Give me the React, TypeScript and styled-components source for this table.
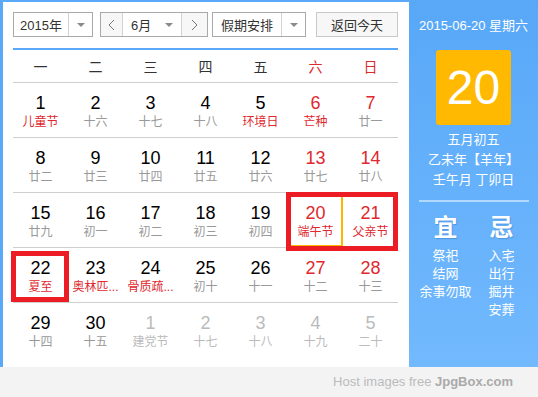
import styled, { createGlobalStyle } from "styled-components";

const GlobalStyle = createGlobalStyle`
  body {
    margin: 0;
    background: #f3f3f3;
    font-family: "Liberation Sans", "Noto Sans CJK SC", sans-serif;
  }
`;

type MarkKind = "left" | "right" | "single";

type Day = {
    num: number,
    lunar: string,
    weekend?: boolean,
    fest?: boolean,
    other?: boolean,
    today?: boolean,
    mark?: MarkKind
}

const weeks: Day[][] = [
    [
        { num: 1, lunar: "儿童节", fest: true },
        { num: 2, lunar: "十六" },
        { num: 3, lunar: "十七" },
        { num: 4, lunar: "十八" },
        { num: 5, lunar: "环境日", fest: true },
        { num: 6, lunar: "芒种", fest: true, weekend: true },
        { num: 7, lunar: "廿一", weekend: true },
    ],
    [
        { num: 8, lunar: "廿二" },
        { num: 9, lunar: "廿三" },
        { num: 10, lunar: "廿四" },
        { num: 11, lunar: "廿五" },
        { num: 12, lunar: "廿六" },
        { num: 13, lunar: "廿七", weekend: true },
        { num: 14, lunar: "廿八", weekend: true },
    ],
    [
        { num: 15, lunar: "廿九" },
        { num: 16, lunar: "初一" },
        { num: 17, lunar: "初二" },
        { num: 18, lunar: "初三" },
        { num: 19, lunar: "初四" },
        { num: 20, lunar: "端午节", fest: true, weekend: true, today: true, mark: "left" },
        { num: 21, lunar: "父亲节", fest: true, weekend: true, mark: "right" },
    ],
    [
        { num: 22, lunar: "夏至", fest: true, mark: "single" },
        { num: 23, lunar: "奥林匹...", fest: true },
        { num: 24, lunar: "骨质疏...", fest: true },
        { num: 25, lunar: "初十" },
        { num: 26, lunar: "十一" },
        { num: 27, lunar: "十二", weekend: true },
        { num: 28, lunar: "十三", weekend: true },
    ],
    [
        { num: 29, lunar: "十四" },
        { num: 30, lunar: "十五" },
        { num: 1, lunar: "建党节", other: true },
        { num: 2, lunar: "十七", other: true },
        { num: 3, lunar: "十八", other: true },
        { num: 4, lunar: "十九", other: true },
        { num: 5, lunar: "二十", other: true },
    ],
];

const weekdays = ["一", "二", "三", "四", "五", "六", "日"];

const Chevron = ({ dir }: { dir: "left" | "right" }) => (
    <svg width="7" height="12" viewBox="0 0 7 12">
        <polyline
            points={dir === "left" ? "6,1 1,6 6,11" : "1,1 6,6 1,11"}
            fill="none"
            stroke="#777"
            strokeWidth="1"
        />
    </svg>
);

const App = () => {
    return (
        <>
            <GlobalStyle />
            <Calendar>
                <Main>
                    <Toolbar>
                        <Select width={80}>
                            <SelectText>2015年</SelectText>
                            <ArrowPart><Caret /></ArrowPart>
                        </Select>
                        <Select width={108} gap={7}>
                            <NavButton side="left"><Chevron dir="left" /></NavButton>
                            <MonthPart>
                                <span>6月</span>
                                <Caret />
                            </MonthPart>
                            <NavButton side="right"><Chevron dir="right" /></NavButton>
                        </Select>
                        <Select width={94} gap={4}>
                            <SelectText>假期安排</SelectText>
                            <ArrowPart><Caret /></ArrowPart>
                        </Select>
                        <TodayButton>返回今天</TodayButton>
                    </Toolbar>

                    <WeekHeader>
                        {weekdays.map((w, i) => (
                            <Weekday key={w} weekend={i > 4}>{w}</Weekday>
                        ))}
                    </WeekHeader>

                    {weeks.map((week, wi) => (
                        <Week key={wi} last={wi === weeks.length - 1}>
                            {week.map((d, di) => (
                                <DayCell key={di} today={!!d.today}>
                                    <DayNum weekend={!!d.weekend} other={!!d.other}>{d.num}</DayNum>
                                    <Lunar fest={!!d.fest} other={!!d.other}>{d.lunar}</Lunar>
                                    {d.mark && <Mark kind={d.mark} />}
                                </DayCell>
                            ))}
                        </Week>
                    ))}
                </Main>

                <Side>
                    <DateLine>2015-06-20 星期六</DateLine>
                    <BigDay>20</BigDay>
                    <LunarInfo>
                        <div>五月初五</div>
                        <div>乙未年【羊年】</div>
                        <div>壬午月 丁卯日</div>
                    </LunarInfo>
                    <Divider />
                    <YiJi>
                        <YiJiCol>
                            <YiJiHead>宜</YiJiHead>
                            <YiJiItem>祭祀</YiJiItem>
                            <YiJiItem>结网</YiJiItem>
                            <YiJiItem>余事勿取</YiJiItem>
                        </YiJiCol>
                        <YiJiCol>
                            <YiJiHead>忌</YiJiHead>
                            <YiJiItem>入宅</YiJiItem>
                            <YiJiItem>出行</YiJiItem>
                            <YiJiItem>掘井</YiJiItem>
                            <YiJiItem>安葬</YiJiItem>
                        </YiJiCol>
                    </YiJi>
                </Side>
            </Calendar>
            <Footer>
                Host images free <b>JpgBox.com</b>
            </Footer>
        </>
    );
};

const Calendar = styled.div`
    display: flex;
    height: 367px;
    box-sizing: border-box;
    border-top: 2px solid #5aa9f8;
    border-left: 3px solid #5aa9f8;
`;

const Main = styled.div`
    width: 406px;
    box-sizing: border-box;
    background: #fff;
    padding: 10px 11px 0 10px;
`;

const Toolbar = styled.div`
    display: flex;
    height: 25px;
    margin-bottom: 11px;
`;

type SelectProps = { width: number, gap?: number };

const Select = styled.div<SelectProps>`
    display: flex;
    width: ${(p) => p.width}px;
    margin-left: ${(p) => p.gap || 0}px;
    box-sizing: border-box;
    border: 1px solid #a9a9a9;
    background: #fff;
    font-size: 13px;
    color: #333;
`;

const SelectText = styled.div`
    flex: 1;
    display: flex;
    align-items: center;
    justify-content: center;
`;

const ArrowPart = styled.div`
    width: 23px;
    border-left: 1px solid #d2d2d2;
    display: flex;
    align-items: center;
    justify-content: center;
`;

const Caret = styled.span`
    width: 0;
    height: 0;
    border-left: 4px solid transparent;
    border-right: 4px solid transparent;
    border-top: 4px solid #8a8a8a;
`;

const NavButton = styled.div<{ side: "left" | "right" }>`
    width: ${(p) => (p.side === "left" ? 21 : 25)}px;
    background: #f7f7f7;
    ${(p) => (p.side === "left" ? "border-right" : "border-left")}: 1px solid #d2d2d2;
    display: flex;
    align-items: center;
    justify-content: center;
`;

const MonthPart = styled.div`
    flex: 1;
    display: flex;
    align-items: center;
    justify-content: space-between;
    padding: 0 8px;
`;

const TodayButton = styled.div`
    width: 82px;
    margin-left: 10px;
    box-sizing: border-box;
    border: 1px solid #c8c8c8;
    background: #f7f7f7;
    font-size: 13px;
    color: #333;
    display: flex;
    align-items: center;
    justify-content: center;
`;

const WeekHeader = styled.div`
    display: grid;
    grid-template-columns: repeat(7, 55px);
    height: 35px;
    box-sizing: border-box;
    border-top: 2px solid #5aa9f8;
    border-bottom: 1px solid #cfcfcf;
`;

const Weekday = styled.div<{ weekend: boolean }>`
    display: flex;
    align-items: center;
    justify-content: center;
    font-size: 14px;
    color: ${(p) => (p.weekend ? "#e0282e" : "#333")};
`;

const Week = styled.div<{ last: boolean }>`
    display: grid;
    grid-template-columns: repeat(7, 55px);
    height: ${(p) => (p.last ? 54 : 55)}px;
    box-sizing: border-box;
    border-bottom: ${(p) => (p.last ? "none" : "1px solid #cfcfcf")};
`;

const DayCell = styled.div<{ today: boolean }>`
    position: relative;
    display: flex;
    flex-direction: column;
    align-items: center;
    box-sizing: border-box;
    padding-top: ${(p) => (p.today ? 8 : 10)}px;
    border: ${(p) => (p.today ? "2px solid #ffb400" : "none")};
`;

const DayNum = styled.div<{ weekend: boolean, other: boolean }>`
    font-size: 18px;
    line-height: 20px;
    color: ${(p) => (p.other ? "#bbb" : p.weekend ? "#e0282e" : "#000")};
`;

const Lunar = styled.div<{ fest: boolean, other: boolean }>`
    font-size: 12px;
    line-height: 18px;
    white-space: nowrap;
    color: ${(p) => (p.other ? "#bbb" : p.fest ? "#e0282e" : "#999")};
`;

// red highlight boxes drawn over the cells; "left" sits in the today cell,
// whose 2px border shifts its offsets
const markPos: Record<MarkKind, string> = {
    left: "top: -3px; bottom: -6px; left: -4px; right: -2px; border-right: none;",
    right: "top: -1px; bottom: -4px; left: 0; right: 0; border-left: none;",
    single: "top: 3px; bottom: 0; left: -2px; right: -1px;",
};

const Mark = styled.div<{ kind: MarkKind }>`
    position: absolute;
    border: 5px solid #ec1c24;
    ${(p) => markPos[p.kind]}
`;

const Side = styled.div`
    flex: 1;
    display: flex;
    flex-direction: column;
    align-items: center;
    padding-top: 14px;
    background: linear-gradient(#58a8f8, #72b9fe);
    color: #fff;
`;

const DateLine = styled.div`
    font-size: 13px;
    line-height: 20px;
`;

const BigDay = styled.div`
    width: 75px;
    height: 75px;
    margin-top: 14px;
    border-radius: 3px;
    background: #ffb900;
    font-size: 48px;
    line-height: 75px;
    text-align: center;
`;

const LunarInfo = styled.div`
    margin-top: 5px;
    font-size: 13px;
    line-height: 20px;
    text-align: center;
`;

const Divider = styled.div`
    width: 110px;
    height: 2px;
    margin-top: 10px;
    background: rgba(255, 255, 255, 0.5);
`;

const YiJi = styled.div`
    display: grid;
    grid-template-columns: 56px 56px;
    margin-top: 12px;
`;

const YiJiCol = styled.div`
    display: flex;
    flex-direction: column;
    align-items: center;
`;

const YiJiHead = styled.div`
    font-size: 24px;
    font-weight: bold;
    line-height: 28px;
    margin-bottom: 5px;
    text-shadow: 1px 1px 1px rgba(0, 60, 140, 0.25);
`;

const YiJiItem = styled.div`
    font-size: 13px;
    line-height: 18px;
    white-space: nowrap;
`;

const Footer = styled.div`
    height: 30px;
    line-height: 30px;
    padding-right: 25px;
    text-align: right;
    font-size: 13px;
    color: #bbb;

    b {
        color: #aaa;
    }
`;

export default App;
